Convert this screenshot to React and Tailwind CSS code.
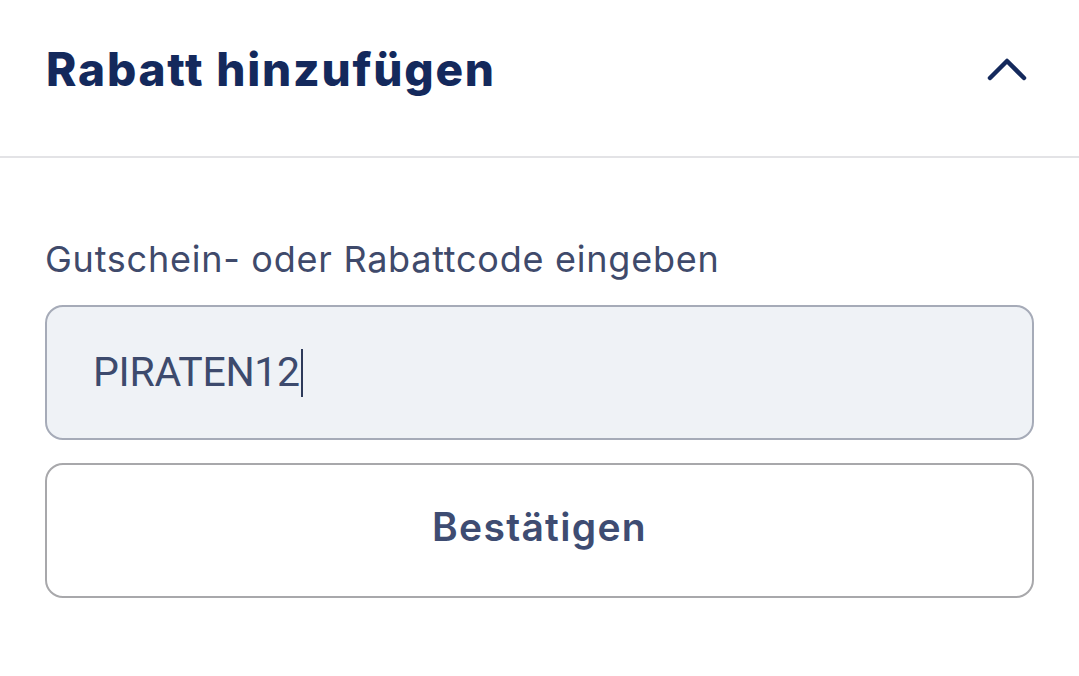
import React from "react";

export default function App() {
  return (
    <div className="w-[1079px] h-[676px] bg-white overflow-hidden" style={{ fontFamily: "Inter, 'Noto Sans', sans-serif" }}>
      <div className="flex items-center justify-between h-[156px] pl-[46px] pr-[52px] pb-[18px]">
        <h1 className="text-[46px] font-extrabold text-[#14295c] tracking-[1.8px]">Rabatt hinzufügen</h1>
        <svg width="40" height="26" viewBox="0 0 40 26" fill="none" className="mt-[-2px]">
          <path d="M3 23 L20 6 L37 23" stroke="#14295c" strokeWidth="4.5" strokeLinecap="round" strokeLinejoin="round" />
        </svg>
      </div>
      <div className="h-[2px] bg-[#e3e3e6]" />
      <div className="px-[45px] pt-[77px] flex flex-col">
        <label className="text-[36px] leading-[48px] text-[#3f4a6b] tracking-[0.75px]">Gutschein- oder Rabattcode eingeben</label>
        <div className="mt-[22px] h-[135px] rounded-[18px] border-2 border-[#a6abb8] bg-[#eff2f6] flex items-center pl-[46px]">
          <span className="text-[41px] text-[#3d4a6d] tracking-[-0.3px]" style={{ fontFamily: "Roboto, sans-serif" }}>PIRATEN12</span>
          <span className="w-[2px] h-[48px] bg-[#2e3a5a] ml-[1px]" />
        </div>
        <button className="mt-[23px] h-[135px] rounded-[18px] border-2 border-[#a8a8ab] bg-white text-[39px] font-semibold text-[#3e4c72] tracking-[1.3px] pb-[6px]">
          Bestätigen
        </button>
      </div>
    </div>
  );
}
